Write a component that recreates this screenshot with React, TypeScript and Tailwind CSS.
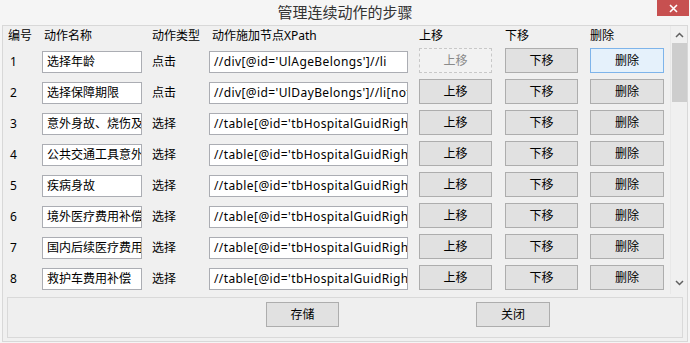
import React from 'react';

interface StepRow {
  id: number;
  name: string;
  kind: string;
  xpath: string;
}

const steps: StepRow[] = [
  { id: 1, name: '选择年龄', kind: '点击', xpath: "//div[@id='UlAgeBelongs']//li" },
  { id: 2, name: '选择保障期限', kind: '点击', xpath: "//div[@id='UlDayBelongs']//li[not(@class)]" },
  { id: 3, name: '意外身故、烧伤及残疾', kind: '选择', xpath: "//table[@id='tbHospitalGuidRight']//td" },
  { id: 4, name: '公共交通工具意外伤害', kind: '选择', xpath: "//table[@id='tbHospitalGuidRight']//td" },
  { id: 5, name: '疾病身故', kind: '选择', xpath: "//table[@id='tbHospitalGuidRight']//td" },
  { id: 6, name: '境外医疗费用补偿', kind: '选择', xpath: "//table[@id='tbHospitalGuidRight']//td" },
  { id: 7, name: '国内后续医疗费用补偿', kind: '选择', xpath: "//table[@id='tbHospitalGuidRight']//td" },
  { id: 8, name: '救护车费用补偿', kind: '选择', xpath: "//table[@id='tbHospitalGuidRight']//td" },
];

const font = "font-['Noto_Sans','Noto_Sans_CJK_SC',sans-serif]";

type BtnState = 'normal' | 'disabled' | 'focused';

const WinButton: React.FC<{ label: string; width: string; state?: BtnState }> = ({ label, width, state = 'normal' }) => {
  const look =
    state === 'disabled'
      ? 'border-dashed border-[#c8c8c8] bg-[#f2f2f2] text-[#8a8a8a]'
      : state === 'focused'
        ? 'border-[#7eb4ea] bg-[#e5f1fb] text-black'
        : 'border-[#adadad] bg-[#e1e1e1] text-black';
  return (
    <div className={`${width} h-[25px] shrink-0 flex items-center justify-center border text-[12px] ${look}`}>
      {label}
    </div>
  );
};

const TextBox: React.FC<{ value: string; width: string; wide?: boolean }> = ({ value, width, wide }) => (
  <div
    className={`${width} h-[22px] shrink-0 border border-[#abadb3] bg-white pl-[4px] pr-[2px] flex items-center overflow-hidden whitespace-nowrap text-[12px] text-black ${wide ? 'tracking-[0.4px]' : ''}`}
  >
    {value}
  </div>
);

const Chevron: React.FC<{ up?: boolean }> = ({ up }) => (
  <svg width="9" height="6" viewBox="0 0 9 6">
    <path d={up ? 'M1 5 L4.5 1.5 L8 5' : 'M1 1 L4.5 4.5 L8 1'} fill="none" stroke="#606060" strokeWidth="1.5" />
  </svg>
);

export default function App() {
  return (
    <div className={`w-[690px] h-[343px] bg-[#f5f5f5] flex flex-col overflow-hidden ${font}`}>
      {/* title bar */}
      <div className="h-[25px] flex shrink-0">
        <div className="w-[33px]" />
        <div className="flex-1 text-center text-[15px] leading-[24px] text-[#333333]">管理连续动作的步骤</div>
        <div className="w-[32px] h-[16px] bg-[#c75050] flex items-center justify-center">
          <svg width="9" height="9" viewBox="0 0 9 9">
            <path d="M1 1 L8 8 M8 1 L1 8" stroke="#ffffff" strokeWidth="1.6" />
          </svg>
        </div>
        <div className="w-[1px]" />
      </div>

      {/* body */}
      <div className="mx-[2px] mb-[1px] flex-1 border border-[#d8d8d8] bg-[#f0f0f0] flex flex-col">
        <div className="h-[268px] flex">
          <div className="flex-1 text-[12px] text-black">
            <div className="h-[19px] flex items-center">
              <div className="w-[39px] pl-[5px]">编号</div>
              <div className="w-[110px] pl-[2px]">动作名称</div>
              <div className="w-[57px]">动作类型</div>
              <div className="w-[210px] pl-[3px]">动作施加节点XPath</div>
              <div className="w-[86px]">上移</div>
              <div className="w-[85px]">下移</div>
              <div>删除</div>
            </div>
            {steps.map((s, i) => (
              <div key={s.id} className="h-[31px] flex items-end pb-[3px]">
                <div className="w-[39px] h-[22px] pl-[7px] flex items-center">{s.id}</div>
                <TextBox value={s.name} width="w-[100px]" />
                <div className="w-[10px]" />
                <div className="w-[57px] h-[22px] flex items-center">{s.kind}</div>
                <TextBox value={s.xpath} width="w-[199px]" wide />
                <div className="w-[11px]" />
                <WinButton label="上移" width="w-[73px]" state={i === 0 ? 'disabled' : 'normal'} />
                <div className="w-[13px]" />
                <WinButton label="下移" width="w-[73px]" />
                <div className="w-[12px]" />
                <WinButton label="删除" width="w-[74px]" state={i === 0 ? 'focused' : 'normal'} />
              </div>
            ))}
          </div>

          {/* scrollbar */}
          <div className="w-[17px] bg-[#f0f0f0] border-l border-[#e8e8e8] flex flex-col items-center">
            <div className="h-[17px] flex items-center justify-center">
              <Chevron up />
            </div>
            <div className="w-[15px] h-[59px] bg-[#cdcdcd]" />
            <div className="flex-1" />
            <div className="h-[17px] mb-[3px] flex items-center justify-center">
              <Chevron />
            </div>
          </div>
        </div>

        {/* bottom panel */}
        <div className="mx-[4px] mt-[3px] h-[41px] border border-[#d9d9d9] bg-[#efefef] flex pt-[4px]">
          <div className="ml-[258px] flex gap-[137px]">
            <WinButton label="存储" width="w-[73px]" />
            <WinButton label="关闭" width="w-[74px]" />
          </div>
        </div>
      </div>
    </div>
  );
}
